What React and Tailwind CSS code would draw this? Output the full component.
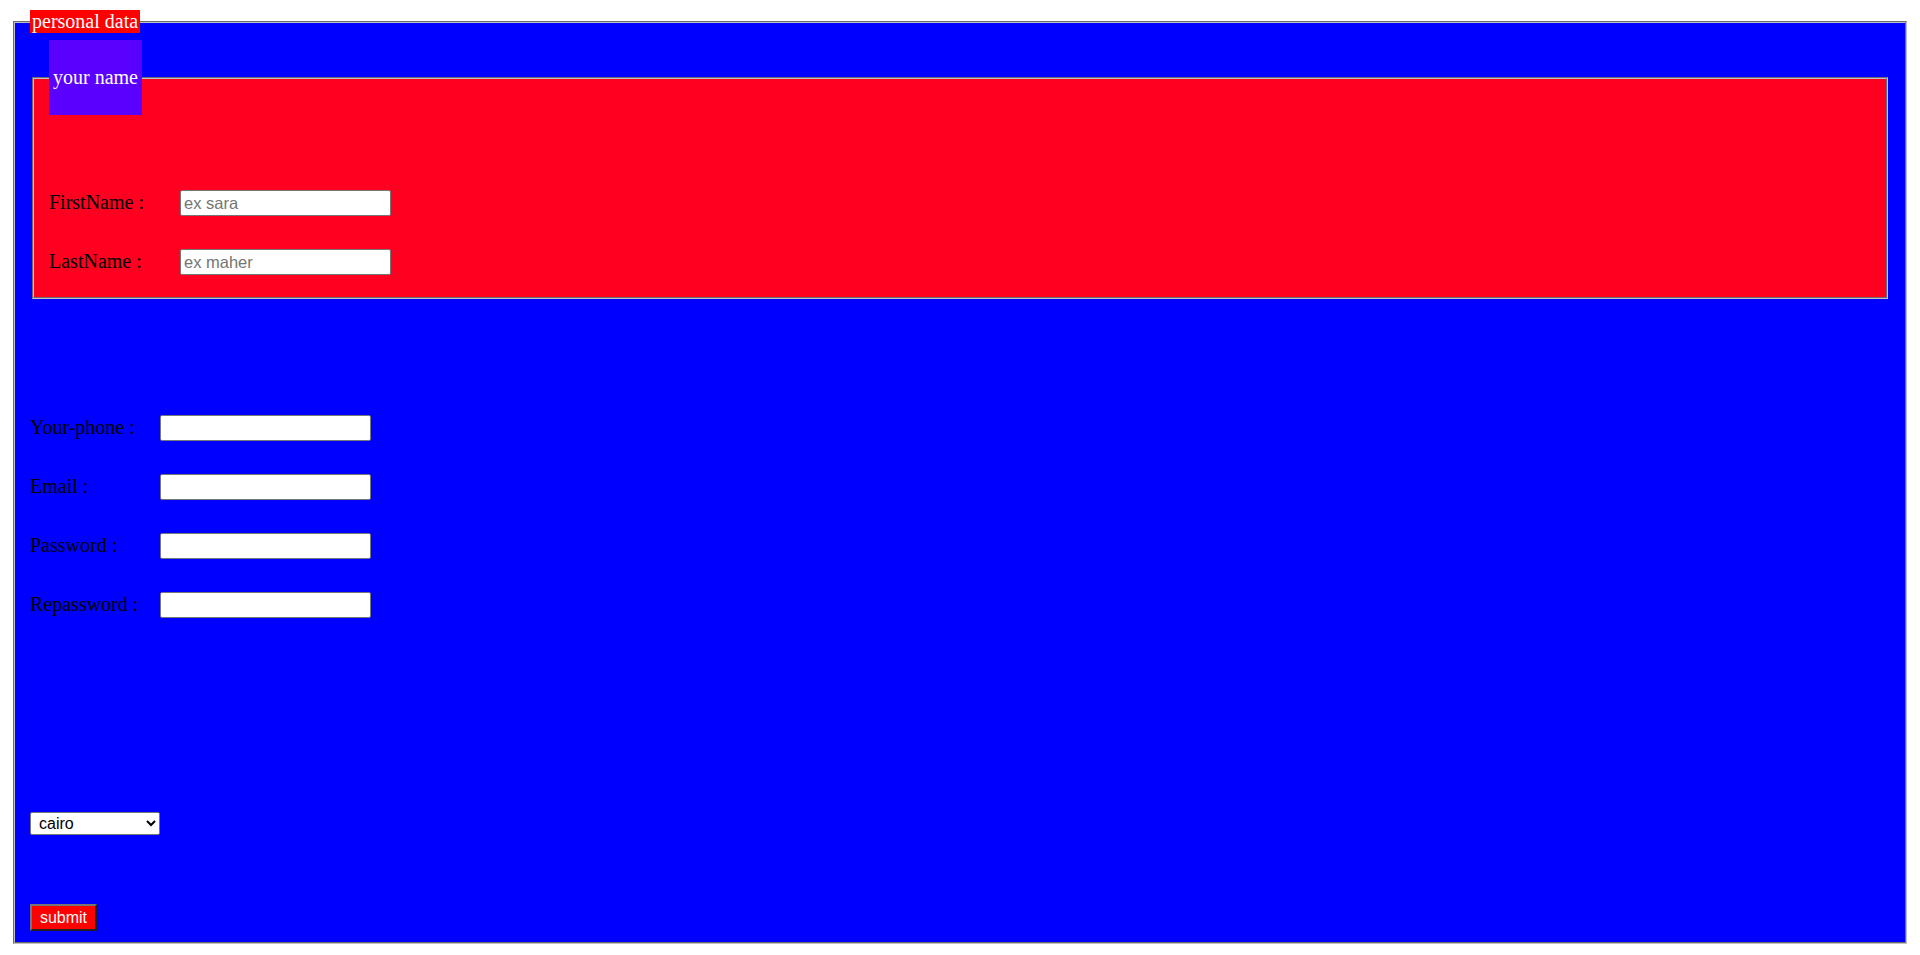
import React from 'react';

function Row({ label, placeholder, labelClass }) {
  return (
    <div className="flex items-baseline">
      <label className={labelClass}>{label}</label>
      <input
        type="text"
        placeholder={placeholder}
        className="h-[26px] w-[211px] rounded-[2px] border border-[#767676] bg-white px-[3px] font-['Liberation_Sans',Arial,sans-serif] text-[16.5px] text-black placeholder:text-[#757575]"
      />
    </div>
  );
}

export default function App() {
  return (
    <div className="min-h-[955px] bg-white pt-[10px] pb-[11px] font-['Liberation_Serif','Times_New_Roman',serif] text-[20px] leading-[23px] text-black">
      <fieldset className="mx-[13px] border-2 border-[#c0c0c0] [border-style:groove] bg-[#0000ff] px-[15px] pt-[7px] pb-[11px]">
        <legend className="bg-[#ff0000] px-[2px] text-white">personal data</legend>

        {/* your name block */}
        <fieldset className="mx-[2px] border-2 border-[#c0c0c0] [border-style:groove] bg-[#ff0020] px-[15px] pt-[7px] pb-[22px]">
          <legend className="bg-[#5a00ff] px-[4px] py-[26px] text-white">your name</legend>
          <div className="mt-[68px] flex flex-col gap-[33px]">
            <Row label="FirstName :" placeholder="ex sara" labelClass="w-[131px] shrink-0" />
            <Row label="LastName :" placeholder="ex maher" labelClass="w-[131px] shrink-0" />
          </div>
        </fieldset>

        <div className="mt-[116px] flex flex-col gap-[33px]">
          <Row label="Your-phone :" labelClass="w-[130px] shrink-0" />
          <Row label="Email :" labelClass="w-[130px] shrink-0" />
          <Row label="Password :" labelClass="w-[130px] shrink-0" />
          <Row label="Repassword :" labelClass="w-[130px] shrink-0" />
        </div>

        <select
          defaultValue="cairo"
          className="mt-[194px] block h-[23px] w-[130px] rounded-[2px] border border-[#767676] bg-white pl-[4px] font-['Liberation_Sans',Arial,sans-serif] text-[16px] leading-[18px] text-black"
        >
          <option value="cairo">cairo</option>
          <option value="alex">alex</option>
          <option value="giza">giza</option>
        </select>

        <button
          type="submit"
          className="mt-[69px] block h-[27px] w-[67px] border-2 border-[#767676] [border-style:outset] bg-[#ff0000] font-['Liberation_Sans',Arial,sans-serif] text-[16px] leading-[18px] text-white"
        >
          submit
        </button>
      </fieldset>
    </div>
  );
}
